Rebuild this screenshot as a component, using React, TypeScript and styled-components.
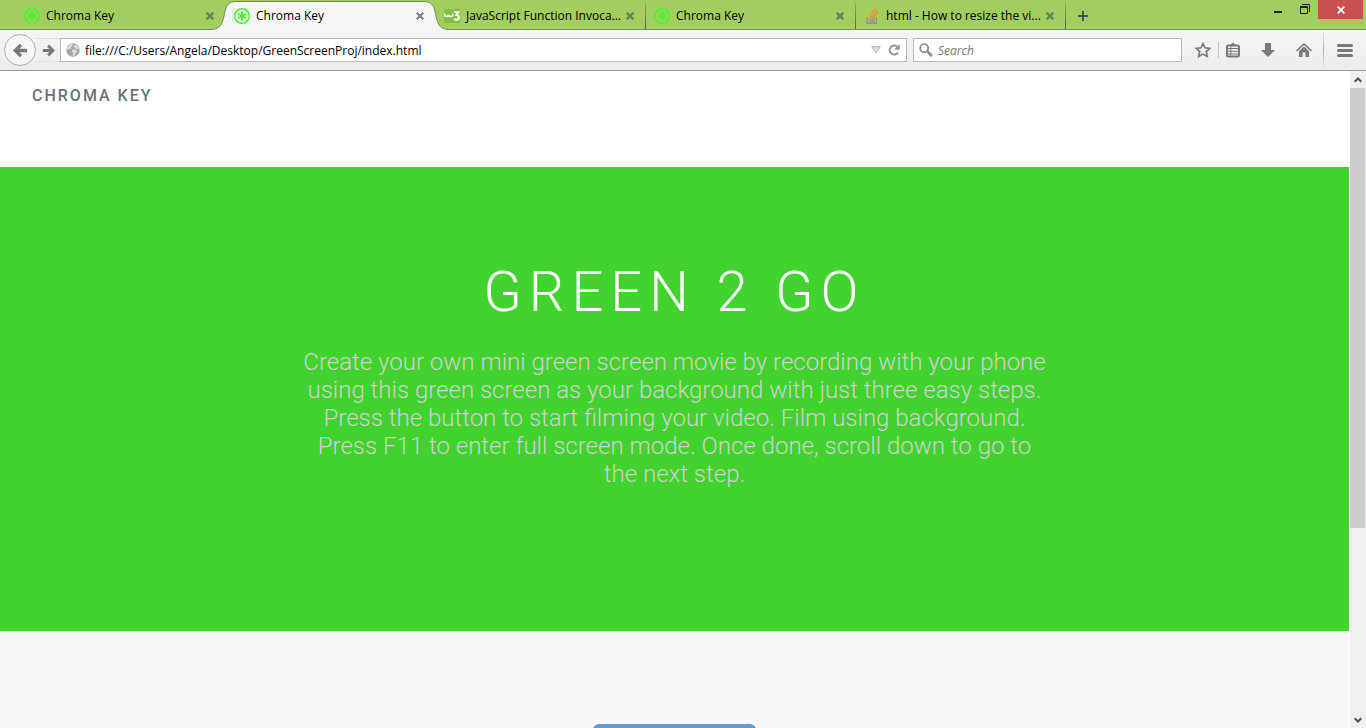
import React from "react";
import styled, { createGlobalStyle } from "styled-components";

const GlobalStyle = createGlobalStyle`
  *, *::before, *::after { box-sizing: border-box; }
  body { margin: 0; background: #fff; }
  button, input { font: inherit; margin: 0; padding: 0; border: 0; background: none; color: inherit; }
`;

const Window = styled.div`
  display: flex;
  flex-direction: column;
  height: 100vh;
  overflow: hidden;
  font: 12px/16px "Open Sans", "Noto Sans", sans-serif;
  color: #000;
`;

const TabStrip = styled.header`
  display: flex;
  height: 30px;
  flex: none;
  padding-left: 15px;
  background: #a2ce60;
  box-shadow: inset 0 -1px #6f9251;
`;

const TabItem = styled.div<{ $divided?: boolean }>`
  position: relative;
  display: flex;
  align-items: center;
  width: 210px;
  padding: 2px 10px 0 9px;
  &::after {
    content: "";
    display: ${(p) => (p.$divided ? "block" : "none")};
    position: absolute;
    right: -1px;
    top: 2px;
    bottom: 1px;
    width: 1px;
    background: linear-gradient(#8db553, #4b6440);
  }
`;

const TabShape = styled.svg`
  position: absolute;
  left: -15px;
  top: 0;
`;

const TabLabel = styled.button`
  position: relative;
  display: flex;
  align-items: center;
  gap: 6px;
  flex: 1;
  min-width: 0;
  text-align: left;
  white-space: nowrap;
  svg { flex: none; }
`;

const TabClose = styled.button`
  position: relative;
  display: flex;
  flex: none;
  width: 10px;
  height: 10px;
`;

const NewTab = styled.button`
  display: flex;
  align-items: center;
  justify-content: center;
  width: 36px;
  padding-top: 2px;
`;

const WindowControls = styled.div`
  display: flex;
  margin-left: auto;
  padding-right: 3px;
  height: 19px;
`;

const WindowButton = styled.button<{ $danger?: boolean }>`
  display: flex;
  align-items: center;
  justify-content: center;
  width: ${(p) => (p.$danger ? 45 : 27)}px;
  background: ${(p) => (p.$danger ? "#c75050" : "transparent")};
`;

const Toolbar = styled.nav`
  display: flex;
  align-items: center;
  height: 41px;
  flex: none;
  padding-left: 4px;
  background: linear-gradient(#f6f6f6, #ebebeb);
  border-bottom: 1px solid #9b9b9b;
`;

const BackButton = styled.button`
  position: relative;
  z-index: 1;
  display: flex;
  align-items: center;
  justify-content: center;
  flex: none;
  width: 32px;
  height: 32px;
  border: 1px solid #a9adb1;
  border-radius: 50%;
  background: #f7f7f7;
`;

const ForwardButton = styled.button`
  display: flex;
  align-items: center;
  justify-content: center;
  flex: none;
  width: 24px;
  height: 24px;
  border: solid #dcdfe2;
  border-width: 1px 0;
`;

const Field = styled.div<{ $grow: number }>`
  display: flex;
  align-items: center;
  gap: 5px;
  flex: ${(p) => p.$grow} 1 0;
  min-width: 0;
  height: 24px;
  margin-right: 6px;
  padding: 0 4px 0 5px;
  border: 1px solid #b1b9c3;
  background: #fff;
  svg { flex: none; }
`;

const FieldInput = styled.input`
  flex: 1;
  min-width: 0;
  padding-top: 2px;
  outline: none;
  &::placeholder { color: #757575; opacity: 1; font-style: italic; }
`;

const IconButton = styled.button<{ $width: number }>`
  display: flex;
  align-items: center;
  justify-content: center;
  flex: none;
  width: ${(p) => p.$width}px;
  height: 24px;
`;

const Divider = styled.span<{ $tall?: boolean }>`
  flex: none;
  width: 1px;
  height: ${(p) => (p.$tall ? 36 : 16)}px;
  margin-left: ${(p) => (p.$tall ? 4 : 0)}px;
  background: ${(p) => (p.$tall ? "linear-gradient(#e5e7e9, #a5acb5, #e5e7e9)" : "#c3c9d1")};
`;

const Viewport = styled.div`
  display: flex;
  flex: 1;
  min-height: 0;
`;

const Page = styled.div`
  flex: 1;
  min-width: 0;
  overflow: hidden;
  background: #f8f8f8;
  font-family: Roboto, sans-serif;
`;

const SiteHeader = styled.div`
  height: 96px;
  padding: 15px 32px;
  background: #fff;
`;

const Brand = styled.a`
  color: #67727a;
  font-size: 16px;
  line-height: 20px;
  font-weight: 500;
  letter-spacing: 2px;
  text-decoration: none;
`;

const Hero = styled.section`
  padding: 97px 32px 143px;
  background: #42d32f;
  text-align: center;
`;

const HeroTitle = styled.h1`
  margin: 0 0 28px;
  color: #fff;
  font-size: 56px;
  line-height: 56px;
  font-weight: 300;
  letter-spacing: 7px;
`;

const HeroText = styled.p`
  max-width: 750px;
  margin: 0 auto;
  color: #d0d0d0;
  font-size: 24px;
  line-height: 28px;
  font-weight: 300;
`;

const Steps = styled.section`
  display: flex;
  justify-content: center;
  padding: 93px 32px;
`;

const StepButton = styled.button`
  width: 163px;
  height: 48px;
  border-radius: 6px;
  background: #629dd1;
`;

const Scrollbar = styled.div`
  display: flex;
  flex-direction: column;
  flex: none;
  width: 17px;
  border-left: 1px solid #fff;
  background: #f0f0f0;
`;

const ScrollButton = styled.button`
  display: flex;
  align-items: center;
  justify-content: center;
  flex: none;
  width: 15px;
  height: 17px;
`;

const ScrollTrack = styled.div`
  display: flex;
  flex-direction: column;
  flex: 1;
  min-height: 0;
`;

const ScrollThumb = styled.div`
  width: 15px;
  flex: 440 1 0;
  background: #cdcdcd;
`;

const ScrollRest = styled.div`
  flex: 183 1 0;
`;

const ChromaIcon = () => (
  <svg width="16" height="16" viewBox="0 0 16 16" fill="none" stroke="#3dfa28">
    <circle cx="8" cy="8" r="7.3" strokeWidth="1.4" />
    <path d="M1.5 4.5 4.5 2M14.5 4.5l-3-2.5M1.5 11.5l3 2.5M14.5 11.5l-3 2.5" strokeWidth="1.3" />
    <path d="M8 3.4v9.2M4 5.7l8 4.6M12 5.7l-8 4.6" strokeWidth="1.9" />
  </svg>
);

const SchoolIcon = () => (
  <svg width="16" height="16" viewBox="0 0 16 16" fill="none" stroke="#fff">
    <path d="M0 1h16v14H0z" fill="#7fc142" stroke="none" />
    <path d="M.8 5.7v1q0 1.7 1.8 1.7T4.7 6.6q0 1.9 2 1.9t2.1-2V5.7" strokeWidth="1.6" />
    <path d="M10.3 4.1h4.2L12.3 7q2.5 0 2.5 2.4t-2.5 2.4q-1.4 0-2.1-1.1" strokeWidth="1.9" />
  </svg>
);

const StackIcon = () => (
  <svg width="16" height="16" viewBox="0 0 16 16" fill="none">
    <path d="M3 9.5v5.8h9.3V9.5" stroke="#91909a" strokeWidth="1.4" />
    <path d="M4.7 13.2h6M4.7 11h6" stroke="#9b8584" strokeWidth="1.2" />
    <path d="m5 8 6 1.3M6 5l5.6 2.8M8.3 2.6l4.4 4.1M11.2.8l2.5 5" stroke="#f58a32" strokeWidth="1.3" />
  </svg>
);

const CloseIcon = ({ active }: { active?: boolean }) => (
  <svg width="10" height="10" viewBox="0 0 10 10">
    <path d="m1.7 1.7 6.6 6.6m0-6.6L1.7 8.3" stroke={active ? "#808790" : "#637f52"} strokeWidth="2.3" />
  </svg>
);

const ArrowIcon = ({ size, flip }: { size: number; flip?: boolean }) => (
  <svg width={size} height={size} viewBox="0 0 16 16" fill="none" stroke="#757a80" strokeWidth="3.6">
    <path d={flip ? "M1 8h12M7.5 2l6 6-6 6" : "M15 8H3M8.5 2l-6 6 6 6"} />
  </svg>
);

const GlobeIcon = () => (
  <svg width="14" height="14" viewBox="0 0 14 14">
    <circle cx="7" cy="7" r="6.7" fill="#a5a5a5" />
    <path d="M2 3.3 5 1l2 .5-.7 1.7L4.8 4l.4 1.4-2 .4L1 7V5zM8 2l3 .2 1.8 3-.8 1-2-.4L8.3 4zM6.8 6.2l2.5.4 2 1.6-1.5 2L8.3 13l-1.6-.6L7 10 5.4 8z" fill="#dedede" />
  </svg>
);

const tabs = [
  { title: "Chroma Key", icon: <ChromaIcon /> },
  { title: "Chroma Key", icon: <ChromaIcon />, active: true },
  { title: "JavaScript Function Invoca...", icon: <SchoolIcon />, divided: true },
  { title: "Chroma Key", icon: <ChromaIcon />, divided: true },
  { title: "html - How to resize the vi...", icon: <StackIcon />, divided: true },
];

export default function App() {
  return (
    <Window>
      <GlobalStyle />
      <TabStrip>
        {tabs.map((tab, i) => (
          <TabItem key={i} $divided={tab.divided}>
            {tab.active && (
              <TabShape width="240" height="30" viewBox="0 0 240 30">
                <path d="M0 30V29.5C9 29.5 12 26 14 16C16 5 18 1.5 27 1.5H213C222 1.5 224 5 226 16C228 26 231 29.5 240 29.5V30z" fill="#f6f6f6" />
                <path d="M0 29.5C9 29.5 12 26 14 16C16 5 18 1.5 27 1.5H213C222 1.5 224 5 226 16C228 26 231 29.5 240 29.5" fill="none" stroke="#6f9251" />
              </TabShape>
            )}
            <TabLabel>
              {tab.icon}
              {tab.title}
            </TabLabel>
            <TabClose aria-label="Close tab">
              <CloseIcon active={tab.active} />
            </TabClose>
          </TabItem>
        ))}
        <NewTab aria-label="New tab">
          <svg width="12" height="12" viewBox="0 0 12 12">
            <path d="M6 1v10M1 6h10" stroke="#44566a" strokeWidth="2" />
          </svg>
        </NewTab>
        <WindowControls>
          <WindowButton aria-label="Minimize">
            <svg width="10" height="10" viewBox="0 0 10 10">
              <path d="M1 6h8v2H1z" fill="#222" />
            </svg>
          </WindowButton>
          <WindowButton aria-label="Restore">
            <svg width="10" height="12" viewBox="0 0 10 12" fill="none" stroke="#222">
              <path d="M.5 3v6.5h7V3M2 .5h7.5V8" />
              <path d="M0 3h8" strokeWidth="2" />
            </svg>
          </WindowButton>
          <WindowButton $danger aria-label="Close">
            <svg width="8" height="8" viewBox="0 0 8 8">
              <path d="m.7.7 6.6 6.6m0-6.6L.7 7.3" stroke="#fff" strokeWidth="1.8" />
            </svg>
          </WindowButton>
        </WindowControls>
      </TabStrip>

      <Toolbar>
        <BackButton aria-label="Back">
          <ArrowIcon size={15} />
        </BackButton>
        <ForwardButton aria-label="Forward">
          <ArrowIcon size={13} flip />
        </ForwardButton>
        <Field $grow={836}>
          <GlobeIcon />
          <FieldInput aria-label="Address" defaultValue="file:///C:/Users/Angela/Desktop/GreenScreenProj/index.html" />
          <svg width="10" height="8" viewBox="0 0 10 8">
            <path d="M.7.7h8.6L5 7z" fill="#dfe4e9" stroke="#a9b3bd" />
          </svg>
          <IconButton $width={16} aria-label="Reload">
            <svg width="12" height="12" viewBox="0 0 12 12" fill="none">
              <path d="M9.2 2.8A4.5 4.5 0 1 0 10 8.4" stroke="#8d98a5" strokeWidth="2" />
              <path d="M11.8 0v5.8H6z" fill="#8d98a5" />
            </svg>
          </IconButton>
        </Field>
        <Field $grow={258}>
          <svg width="14" height="14" viewBox="0 0 14 14" fill="none" stroke="#8f8f8f">
            <circle cx="5.2" cy="5.2" r="4" strokeWidth="1.8" />
            <path d="m8.3 8.3 4.6 4.6" strokeWidth="2.8" />
          </svg>
          <FieldInput aria-label="Search" placeholder="Search" />
        </Field>
        <IconButton $width={30} aria-label="Bookmark">
          <svg width="16" height="16" viewBox="0 0 16 16">
            <path d="m8 1.6 2 4.2 4.7.6-3.4 3.2.9 4.8L8 12.1l-4.2 2.3.9-4.8L1.3 6.4 6 5.8z" fill="none" stroke="#757a80" strokeWidth="1.7" />
          </svg>
        </IconButton>
        <Divider />
        <IconButton $width={28} aria-label="Bookmarks list">
          <svg width="14" height="16" viewBox="0 0 14 16" fill="none" stroke="#757a80">
            <rect x="1" y="3.5" width="12" height="11" rx="1.5" strokeWidth="2" />
            <path d="M3.5 3.5 7 .6l3.5 2.9z" fill="#757a80" stroke="none" />
            <path d="M2 6.5h10M2 9.3h10M2 12h10M4.8 4.5v9" strokeWidth="1.1" />
          </svg>
        </IconButton>
        <IconButton $width={42} aria-label="Downloads">
          <svg width="14" height="14" viewBox="0 0 14 14">
            <path d="M4 0h6v7h4l-7 7-7-7h4z" fill="#757a80" />
          </svg>
        </IconButton>
        <IconButton $width={30} aria-label="Home">
          <svg width="16" height="15" viewBox="0 0 16 15">
            <path d="M.6 7.9 8 1l7.4 6.9" fill="none" stroke="#757a80" strokeWidth="1.5" />
            <path d="M3 8.2 8 3.5l5 4.7V14H9.5V9.5h-3V14H3z" fill="#757a80" />
          </svg>
        </IconButton>
        <Divider $tall />
        <IconButton $width={42} aria-label="Menu">
          <svg width="16" height="13" viewBox="0 0 16 13">
            <path d="M1.5 1.5h13M1.5 6.5h13M1.5 11.5h13" stroke="#757a80" strokeWidth="3" strokeLinecap="round" />
          </svg>
        </IconButton>
      </Toolbar>

      <Viewport>
        <Page>
          <SiteHeader>
            <Brand href="#">CHROMA KEY</Brand>
          </SiteHeader>
          <Hero>
            <HeroTitle>GREEN 2 GO</HeroTitle>
            <HeroText>
              Create your own mini green screen movie by recording with your phone using this green
              screen as your background with just three easy steps. Press the button to start filming
              your video. Film using background. Press F11 to enter full screen mode. Once done,
              scroll down to go to the next step.
            </HeroText>
          </Hero>
          <Steps>
            <StepButton aria-label="Next step" />
          </Steps>
        </Page>
        <Scrollbar>
          <ScrollButton aria-label="Scroll up">
            <svg width="8" height="6" viewBox="0 0 8 6">
              <path d="M.7 4.8 4 1.5l3.3 3.3" fill="none" stroke="#505050" strokeWidth="2" />
            </svg>
          </ScrollButton>
          <ScrollTrack>
            <ScrollThumb />
            <ScrollRest />
          </ScrollTrack>
          <ScrollButton aria-label="Scroll down">
            <svg width="8" height="6" viewBox="0 0 8 6">
              <path d="M.7 1.2 4 4.5l3.3-3.3" fill="none" stroke="#505050" strokeWidth="2" />
            </svg>
          </ScrollButton>
        </Scrollbar>
      </Viewport>
    </Window>
  );
}
